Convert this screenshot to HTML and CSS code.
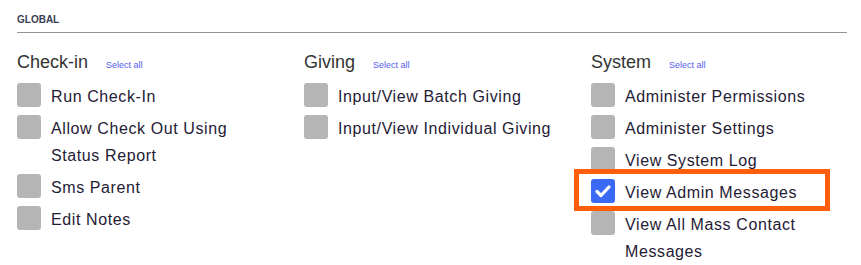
FILE: index.html
```html
<!DOCTYPE html>
<html lang="en">
<head>
<meta charset="utf-8">
<title>Global permissions</title>
<link rel="stylesheet" href="styles.css">
</head>
<body>
<div class="page">
  <div class="section-title">GLOBAL</div>
  <div class="grid">
    <div class="col">
      <div class="col-head"><span class="col-name">Check-in</span><a class="select-all" href="#">Select all</a></div>
      <ul class="perms">
        <li class="perm"><span class="box"></span><span class="label">Run Check-In</span></li>
        <li class="perm"><span class="box"></span><span class="label">Allow Check Out Using Status Report</span></li>
        <li class="perm"><span class="box"></span><span class="label">Sms Parent</span></li>
        <li class="perm"><span class="box"></span><span class="label">Edit Notes</span></li>
      </ul>
    </div>
    <div class="col">
      <div class="col-head"><span class="col-name">Giving</span><a class="select-all" href="#">Select all</a></div>
      <ul class="perms">
        <li class="perm"><span class="box"></span><span class="label">Input/View Batch Giving</span></li>
        <li class="perm"><span class="box"></span><span class="label">Input/View Individual Giving</span></li>
      </ul>
    </div>
    <div class="col">
      <div class="col-head"><span class="col-name">System</span><a class="select-all" href="#">Select all</a></div>
      <ul class="perms">
        <li class="perm"><span class="box"></span><span class="label">Administer Permissions</span></li>
        <li class="perm"><span class="box"></span><span class="label">Administer Settings</span></li>
        <li class="perm"><span class="box"></span><span class="label">View System Log</span></li>
        <li class="perm highlighted"><span class="box checked"><svg viewBox="0 0 24 24" width="24" height="24"><path d="M6 12.5 L10 16.5 L18 8" fill="none" stroke="#fff" stroke-width="3.2" stroke-linecap="round" stroke-linejoin="round"/></svg></span><span class="label">View Admin Messages</span><span class="annot"></span></li>
        <li class="perm"><span class="box"></span><span class="label">View All Mass Contact Messages</span></li>
      </ul>
    </div>
  </div>
</div>
</body>
</html>
```

FILE: styles.css
```css
html, body {
  margin: 0;
  padding: 0;
  background: #fff;
}
body {
  font-family: "Liberation Sans", Arial, sans-serif;
  overflow: hidden;
}
.page {
  width: 830px;
  padding: 14px 0 0 17px;
}
.section-title {
  font-size: 10px;
  line-height: 12px;
  font-weight: bold;
  color: #3a3d55;
  padding-bottom: 6px;
  border-bottom: 1px solid #919191;
}
.grid {
  display: grid;
  grid-template-columns: repeat(3, 1fr);
  column-gap: 31px;
  margin-top: 19px;
}
.col-head {
  display: flex;
  align-items: baseline;
  line-height: 21px;
  margin-bottom: 7px;
}
.col-name {
  font-size: 18px;
  color: #333;
}
.select-all {
  font-size: 9px;
  color: #5560ee;
  text-decoration: none;
  margin-left: 18px;
}
.perms {
  list-style: none;
  margin: 0;
  padding: 0;
}
.perm {
  display: flex;
  align-items: flex-start;
  gap: 10px;
  margin-bottom: 5px;
  position: relative;
}
.box {
  flex: none;
  width: 24px;
  height: 24px;
  border-radius: 3px;
  background: #b5b5b5;
  display: block;
}
.box.checked {
  background: #3a6af4;
}
.box svg {
  display: block;
}
.label {
  font-size: 16px;
  line-height: 27px;
  letter-spacing: 0.6px;
  color: #1f2035;
  max-width: 222px;
}
.annot {
  position: absolute;
  left: -17px;
  top: -10px;
  width: 246px;
  height: 32px;
  border: 5px solid #ff5f0c;
  pointer-events: none;
}
```
